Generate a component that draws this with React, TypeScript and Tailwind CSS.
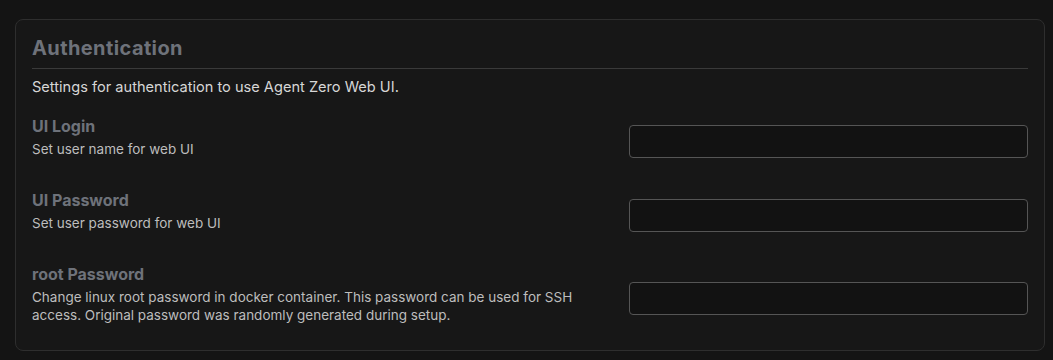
import React from "react";

const rows = [
  { label: "UI Login", desc: "Set user name for web UI", type: "text" },
  { label: "UI Password", desc: "Set user password for web UI", type: "password" },
  {
    label: "root Password",
    desc: "Change linux root password in docker container. This password can be used for SSH access. Original password was randomly generated during setup.",
    type: "password",
  },
];

export default function App() {
  return (
    <div
      className="min-h-[360px] w-full bg-[#141414] pt-[19px] pl-[15px] pr-[8px] pb-[8px]"
      style={{ fontFamily: "Inter, 'Noto Sans', sans-serif" }}
    >
      <div className="rounded-[8px] border border-[#2e2e2e] bg-[#171717] px-[16px] pt-[16px] pb-[18px]">
        <h2 className="text-[20px] font-bold leading-[24px] tracking-[0.4px] text-[#6e727a]">Authentication</h2>
        <div className="mt-[8px] h-px bg-[#3a3a3a]" />
        <p className="mt-[8px] text-[14.6px] leading-[20px] text-[#d6d6d6]">
          Settings for authentication to use Agent Zero Web UI.
        </p>
        <div className="mt-[19px] flex flex-col gap-[24px]">
          {rows.map((r) => (
            <div key={r.label} className="flex items-center justify-between">
              <div className="w-[560px] pb-[8px]">
                <div className="text-[16px] font-bold leading-[20px] text-[#6e727a]">{r.label}</div>
                <div className="mt-[4px] text-[13.5px] leading-[18px] text-[#bdbdbd]">{r.desc}</div>
              </div>
              <input
                type={r.type}
                className="h-[33px] w-[399px] rounded-[4px] border border-[#555555] bg-[#121212] px-2 text-[14px] text-[#d6d6d6] outline-none"
              />
            </div>
          ))}
        </div>
      </div>
    </div>
  );
}
